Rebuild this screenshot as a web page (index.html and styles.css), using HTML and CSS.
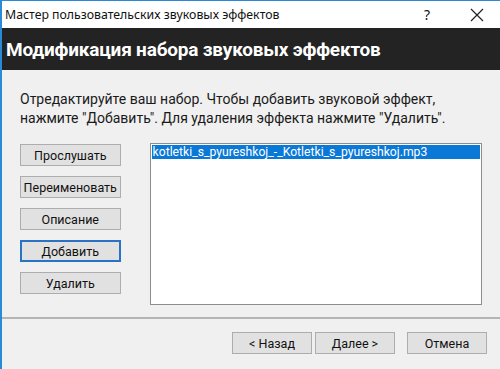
FILE: index.html
```html
<!DOCTYPE html>
<html lang="ru">

<head>
    <meta charset="UTF-8">
    <title>Мастер пользовательских звуковых эффектов</title>
    <link rel="stylesheet" href="styles.css">
</head>

<body>
    <div class="window">
        <div class="titlebar">
            <span class="title">Мастер пользовательских звуковых эффектов</span>
            <span class="help">?</span>
            <span class="close">
                <svg width="14" height="14" viewBox="0 0 14 14">
                    <path d="M1 1 L13 13 M13 1 L1 13" stroke="#222" stroke-width="1.2" fill="none" />
                </svg>
            </span>
        </div>
        <div class="header">
            <h1>Модификация набора звуковых эффектов</h1>
        </div>
        <div class="content">
            <p class="intro">Отредактируйте ваш набор. Чтобы добавить звуковой эффект,<br>нажмите "Добавить". Для удаления эффекта нажмите "Удалить".</p>
            <div class="editor">
                <div class="side-buttons">
                    <button class="btn">Прослушать</button>
                    <button class="btn">Переименовать</button>
                    <button class="btn">Описание</button>
                    <button class="btn focused">Добавить</button>
                    <button class="btn">Удалить</button>
                </div>
                <div class="listbox">
                    <div class="list-item selected">kotletki_s_pyureshkoj_-_Kotletki_s_pyureshkoj.mp3</div>
                </div>
            </div>
        </div>
        <div class="footer">
            <button class="btn nav-btn">&lt; Назад</button>
            <button class="btn nav-btn">Далее &gt;</button>
            <button class="btn nav-btn cancel">Отмена</button>
        </div>
    </div>
</body>

</html>
```

FILE: styles.css
```css
body {
    margin: 0;
    padding: 0;
    font-family: Roboto, "Noto Sans", sans-serif;
    background-color: #f0f0f0;
    color: #111;
}

.window {
    width: 498px;
    height: 368px;
    border-left: 2px solid #2b8ad8;
    border-top: 1px solid #2b8ad8;
    background-color: #f0f0f0;
    overflow: hidden;
}

.titlebar {
    height: 27px;
    background-color: #fff;
    display: flex;
    align-items: center;
    padding-left: 3px;
}

.title {
    flex: 1;
    font-family: "Noto Sans", sans-serif;
    font-size: 12.3px;
    color: #111;
}

.help {
    font-family: "Noto Sans", sans-serif;
    font-size: 14px;
    width: 20px;
    text-align: center;
    margin-right: 33px;
}

.close {
    width: 14px;
    margin-right: 16px;
    display: flex;
    align-items: center;
}

.header {
    height: 42px;
    background-color: #232323;
    display: flex;
    align-items: center;
    padding-left: 4px;
}

.header h1 {
    margin: 0;
    color: #fff;
    font-size: 19px;
    font-weight: bold;
    letter-spacing: -0.2px;
}

.content {
    padding: 20px 18px 0 18px;
}

.intro {
    margin: 0;
    font-size: 14px;
    line-height: 19px;
    color: #1a1a1a;
}

.editor {
    display: flex;
    margin-top: 15px;
    height: 160px;
}

.side-buttons {
    display: flex;
    flex-direction: column;
    gap: 10px;
    width: 101px;
    padding-top: 1px;
}

.btn {
    height: 22px;
    padding: 0;
    background-color: #e1e1e1;
    border: 1px solid #adadad;
    font-family: Roboto, "Noto Sans", sans-serif;
    font-size: 12.5px;
    color: #111;
}

.btn.focused {
    border: 2px solid #2a72c4;
}

.listbox {
    margin-left: 29px;
    width: 330px;
    height: 158px;
    background-color: #fff;
    border: 1px solid #8d8d8d;
    padding: 1px;
}

.list-item {
    height: 14px;
    line-height: 14px;
    font-size: 12.2px;
    padding-left: 1px;
}

.list-item.selected {
    background-color: #0a78d7;
    color: #fff;
}

.footer {
    margin-top: 14px;
    border-top: 2px solid #b4b4b4;
    display: flex;
    padding: 13px 0 0 230px;
}

.nav-btn {
    width: 80px;
    margin-right: 3px;
}

.nav-btn.cancel {
    margin-left: 9px;
}
```
